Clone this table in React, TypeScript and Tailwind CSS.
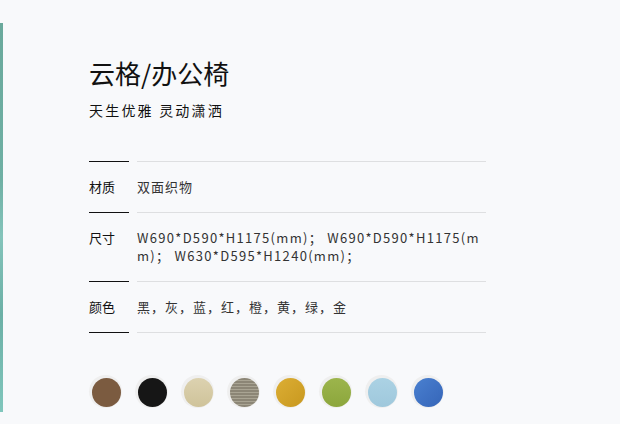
import React from "react";

const font = { fontFamily: '"Noto Sans CJK SC", "Noto Sans", sans-serif' };

function Row({ label, children, wide }: { label: string; children: React.ReactNode; wide?: boolean }) {
  return (
    <div className="flex flex-col">
      <div className="flex h-px">
        <div className="w-[40px] bg-[#111]" />
        <div className="w-[8px]" />
        <div className="flex-1 bg-[#dedfe1]" />
      </div>
      <div className="flex py-[16px] text-[13px] leading-[18px]">
        <div className="w-[48px] shrink-0 text-[#111]">{label}</div>
        <div className={wide ? "flex-1 text-[#333] tracking-[1.3px] break-all" : "flex-1 text-[#333] tracking-[1px] break-all"}>
          {children}
        </div>
      </div>
    </div>
  );
}

const swatches = [
  "bg-[#7b5b40]",
  "bg-[#161616]",
  "bg-[linear-gradient(180deg,#dcd2b0,#cfc39a)]",
  "bg-[repeating-linear-gradient(180deg,#8c8676_0px,#8c8676_2px,#a9a493_2px,#a9a493_3px)]",
  "bg-[linear-gradient(135deg,#dcae34,#c8981f)]",
  "bg-[linear-gradient(180deg,#9cb54c,#8ca63c)]",
  "bg-[linear-gradient(180deg,#abd2e4,#9fc8dc)]",
  "bg-[linear-gradient(135deg,#4a80d0,#3565b8)]",
];

export default function App() {
  return (
    <div className="w-[620px] h-[424px] bg-[#f8f9fb] flex overflow-hidden" style={font}>
      <div className="w-[3px] mt-[23px] h-[389px] bg-[linear-gradient(180deg,#6aa99c_0%,#6fb0a4_40%,#84c4bb_55%,#6cb0a6_75%,#80c6bc_100%)]" />
      <div className="ml-[86px] pt-[55px] w-[397px] flex flex-col">
        <h1 className="text-[26px] leading-[36px] text-[#111] font-normal">云格/办公椅</h1>
        <div className="mt-[9px] text-[14px] leading-[20px] tracking-[2.2px] text-[#111]">天生优雅 灵动潇洒</div>
        <div className="mt-[41px] flex flex-col">
          <Row label="材质">双面织物</Row>
          <Row label="尺寸" wide>W690*D590*H1175(mm)； W690*D590*H1175(mm)； W630*D595*H1240(mm)；</Row>
          <Row label="颜色">黑，灰，蓝，红，橙，黄，绿，金</Row>
          <div className="flex h-px">
            <div className="w-[40px] bg-[#111]" />
            <div className="w-[8px]" />
            <div className="flex-1 bg-[#dedfe1]" />
          </div>
        </div>
        <div className="mt-[42px] flex gap-[13px]">
          {swatches.map((c, i) => (
            <div key={i} className="w-[33px] h-[33px] rounded-full bg-[#efefef] pl-[3px] pt-[3px]">
              <div className={`w-[29px] h-[29px] rounded-full ${c}`} />
            </div>
          ))}
        </div>
      </div>
    </div>
  );
}
